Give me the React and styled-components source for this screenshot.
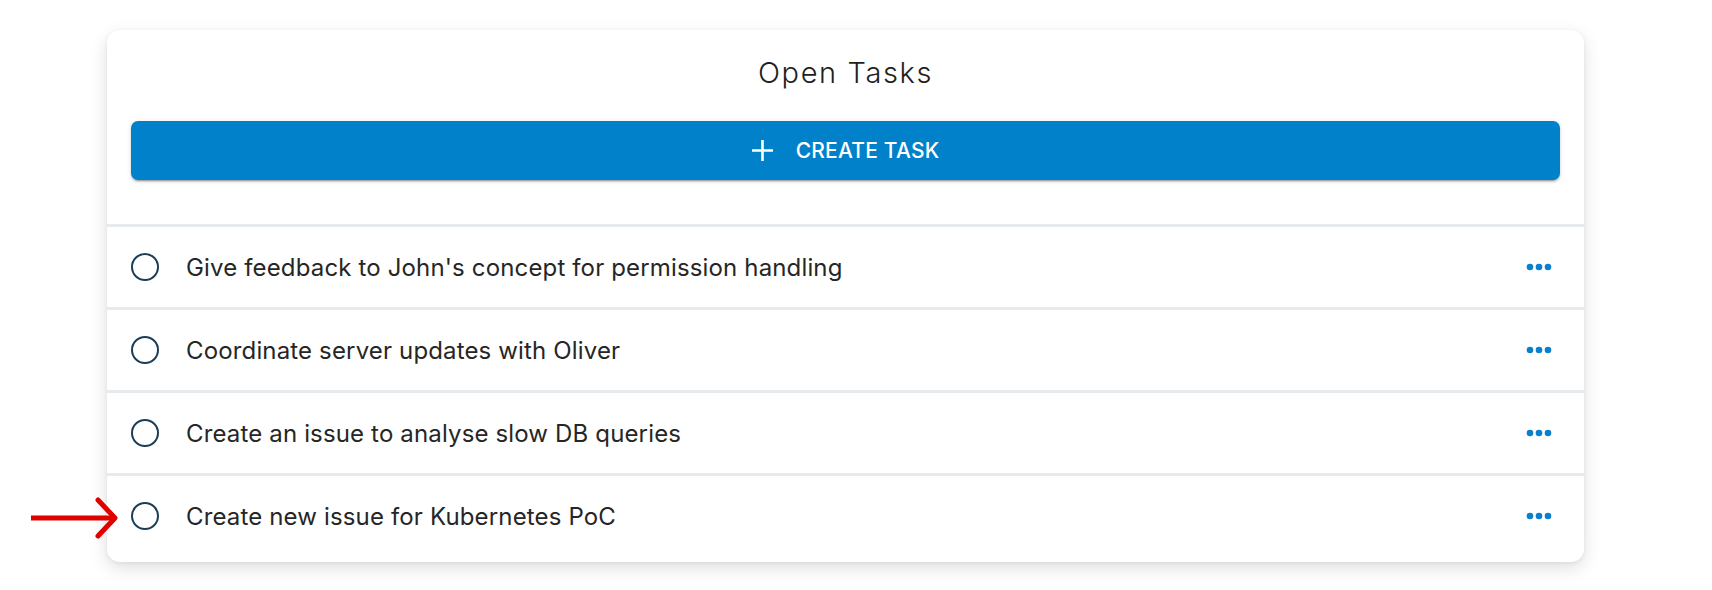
import React from 'react';
import styled, { createGlobalStyle } from 'styled-components';

const GlobalStyle = createGlobalStyle`
    html, body {
        margin: 0;
        padding: 0;
        background: #ffffff;
        font-family: Inter, "Noto Sans", sans-serif;
    }
`;

const Page = styled.div`
    width: 1712px;
    height: 590px;
    padding: 30px 0 0 107px;
    box-sizing: border-box;
    position: relative;
`;

const Card = styled.section`
    width: 1477px;
    background: #fff;
    border-radius: 13px;
    padding-bottom: 6px;
    box-shadow: 0 6px 18px rgba(0, 0, 0, 0.13), 0 1px 4px rgba(0, 0, 0, 0.06);
    overflow: hidden;
`;

const Header = styled.header`
    padding: 0 24px 44px;
`;

const Title = styled.h2`
    margin: 0;
    height: 84px;
    display: flex;
    align-items: center;
    justify-content: center;
    font-size: 29px;
    font-weight: 300;
    letter-spacing: 1.6px;
    color: #1f1f1f;
`;

const CreateButton = styled.button`
    width: 100%;
    height: 59px;
    margin-top: 7px;
    display: flex;
    align-items: center;
    justify-content: center;
    gap: 23px;
    border: 0;
    border-radius: 7px;
    background: #0281cb;
    color: #fff;
    font-family: inherit;
    font-size: 21px;
    font-weight: 500;
    letter-spacing: 0.2px;
    box-shadow: 0 3px 1px -2px rgba(0, 0, 0, 0.2), 0 2px 2px rgba(0, 0, 0, 0.14), 0 1px 5px rgba(0, 0, 0, 0.12);
    cursor: pointer;
`;

const TaskList = styled.ul`
    list-style: none;
    margin: 0;
    padding: 0;
`;

const TaskRow = styled.li`
    height: 80px;
    display: flex;
    align-items: center;
    padding: 0 32px 0 24px;
    border-top: 3px solid #e8ebee;
`;

const Check = styled.span`
    width: 28px;
    height: 28px;
    box-sizing: border-box;
    border: 2.2px solid #1b3d56;
    border-radius: 50%;
    flex-shrink: 0;
`;

const TaskText = styled.span`
    flex: 1;
    margin-left: 27px;
    font-size: 24px;
    letter-spacing: 0.15px;
    color: #262626;
`;

const MoreButton = styled.button`
    border: 0;
    background: none;
    padding: 0;
    display: flex;
    cursor: pointer;
`;

const Arrow = styled.svg`
    position: absolute;
    left: 31px;
    top: 497px;
`;

const tasks = [
    "Give feedback to John's concept for permission handling",
    'Coordinate server updates with Oliver',
    'Create an issue to analyse slow DB queries',
    'Create new issue for Kubernetes PoC',
];

const PlusIcon = () => (
    <svg width="21" height="21" viewBox="0 0 21 21">
        <path d="M10.5 0v21M0 10.5h21" stroke="#fff" strokeWidth="2.6" />
    </svg>
);

const DotsIcon = () => (
    <svg width="26" height="8" viewBox="0 0 26 8">
        <circle cx="4" cy="4" r="3.3" fill="#0a7fcc" />
        <circle cx="13" cy="4" r="3.3" fill="#0a7fcc" />
        <circle cx="22" cy="4" r="3.3" fill="#0a7fcc" />
    </svg>
);

export default function App() {
    return (
        <Page>
            <GlobalStyle />
            <Card>
                <Header>
                    <Title>Open Tasks</Title>
                    <CreateButton>
                        <PlusIcon />
                        CREATE TASK
                    </CreateButton>
                </Header>
                <TaskList>
                    {tasks.map((t) => (
                        <TaskRow key={t}>
                            <Check />
                            <TaskText>{t}</TaskText>
                            <MoreButton aria-label="more">
                                <DotsIcon />
                            </MoreButton>
                        </TaskRow>
                    ))}
                </TaskList>
            </Card>
            <Arrow width="88" height="42" viewBox="0 0 88 42">
                <path d="M0 21h82" stroke="#e00000" strokeWidth="5" />
                <path d="M67 3l17 18-17 18" stroke="#e00000" strokeWidth="5" fill="none" strokeLinecap="round" strokeLinejoin="round" />
            </Arrow>
        </Page>
    );
}
